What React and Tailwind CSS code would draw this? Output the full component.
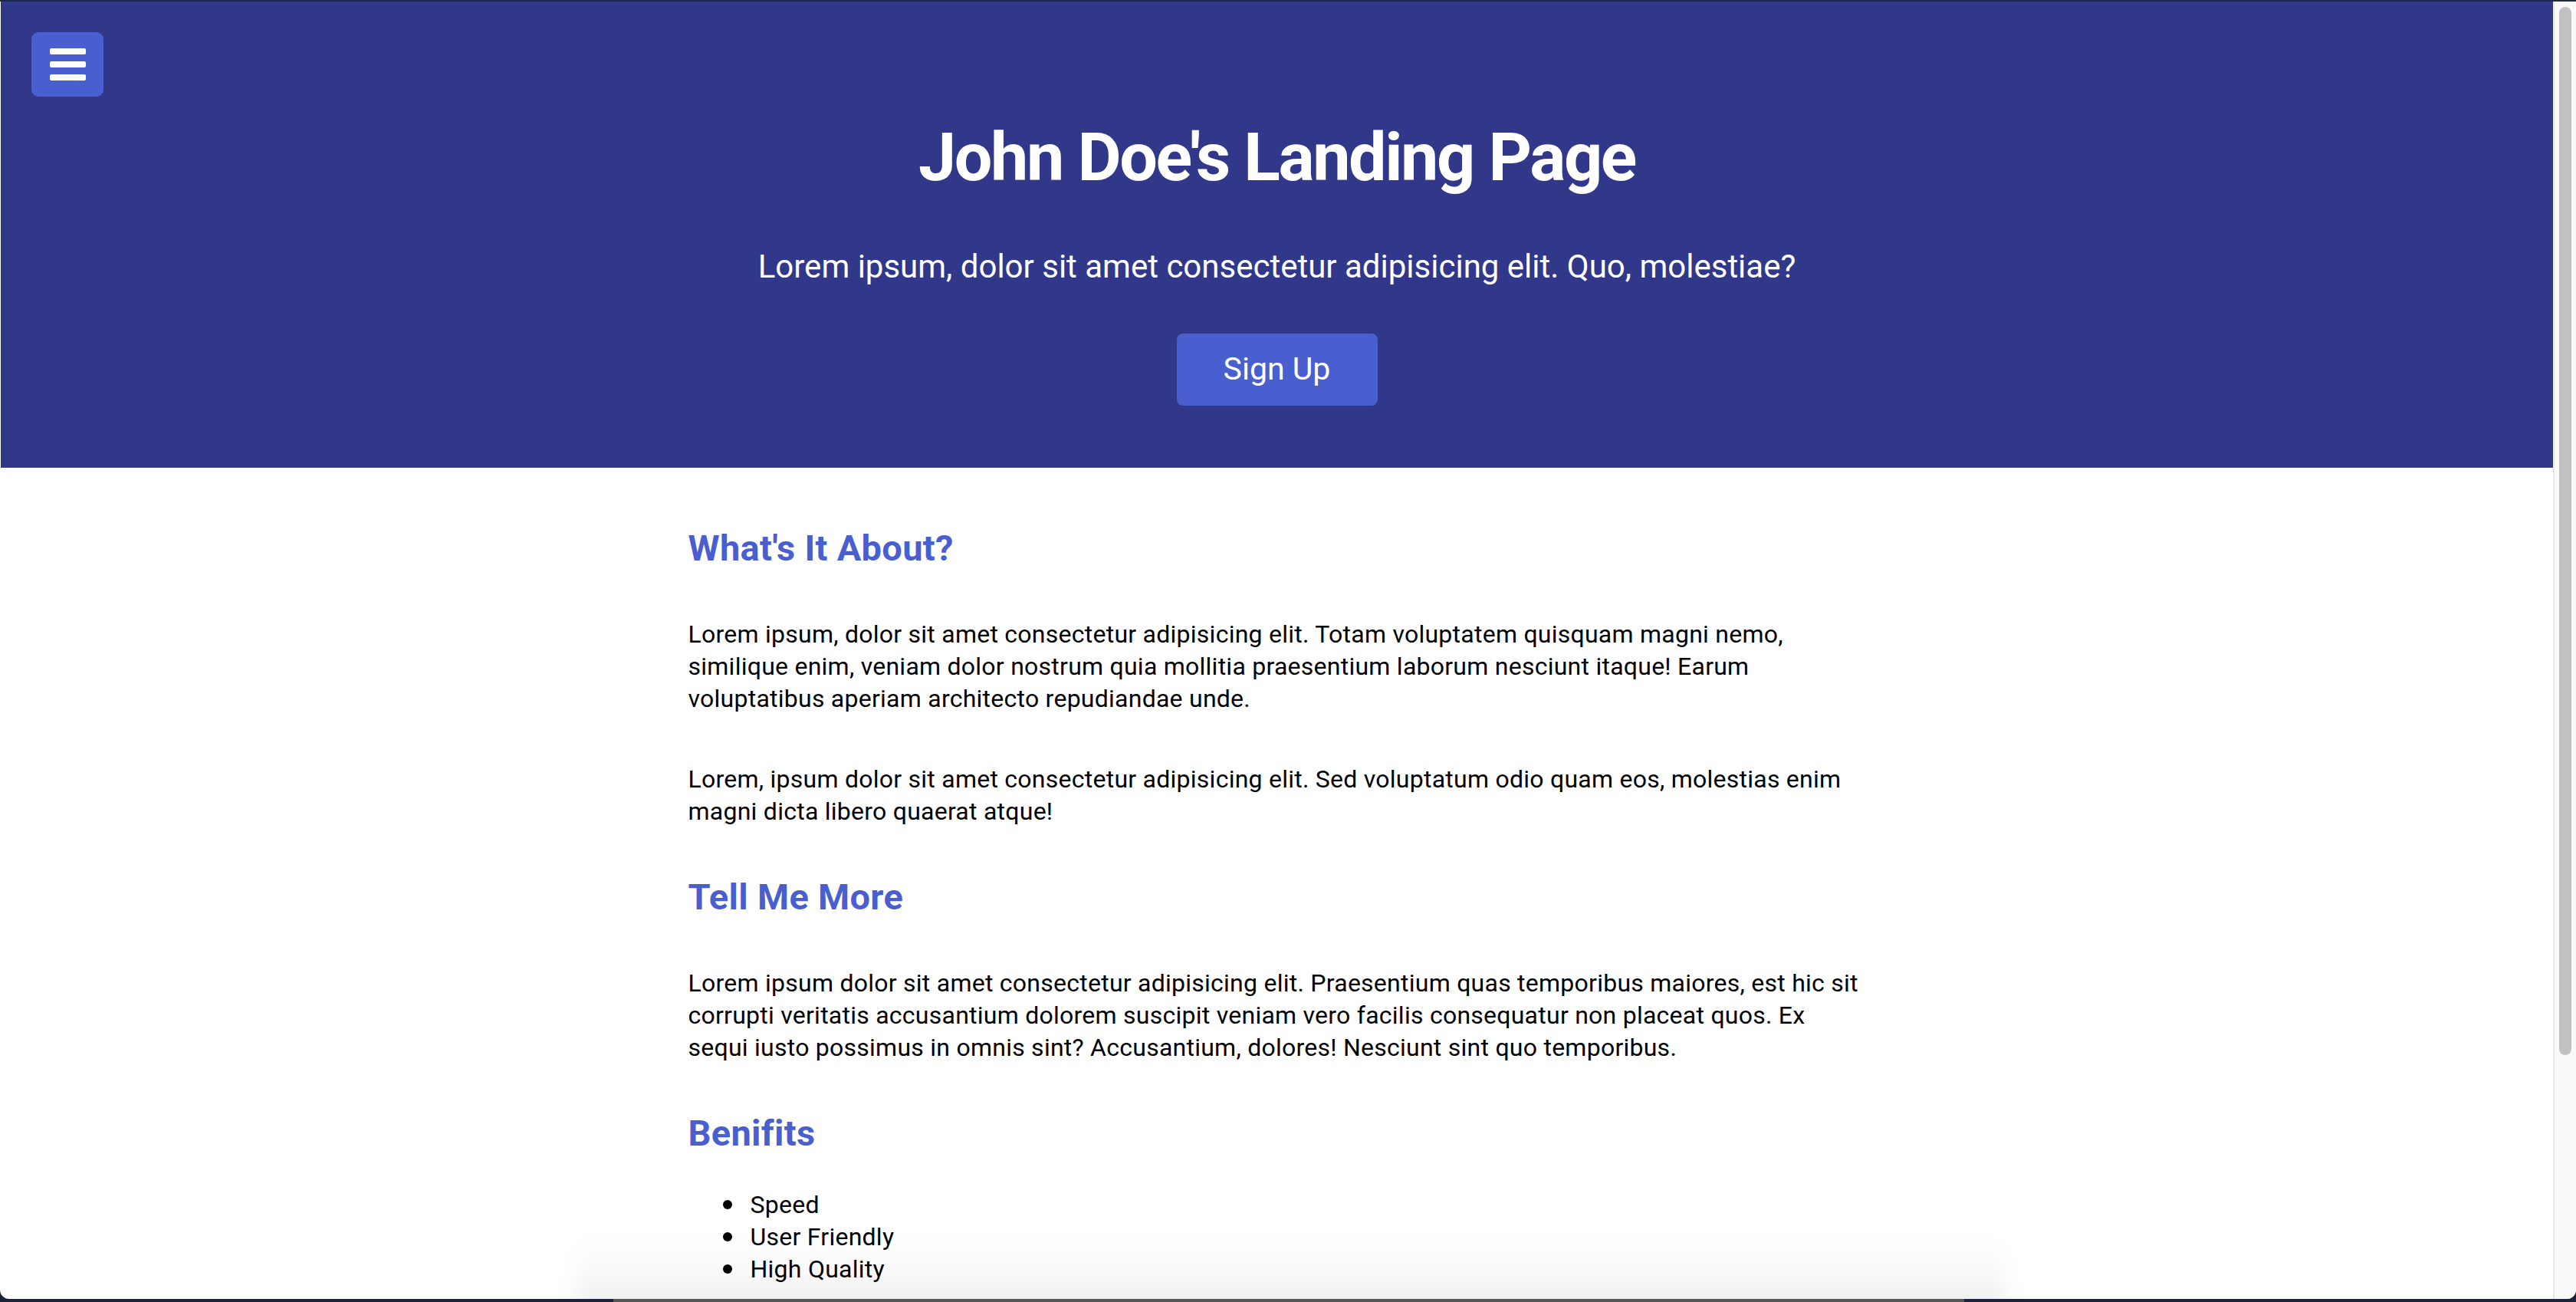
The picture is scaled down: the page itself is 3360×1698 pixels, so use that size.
import React from "react";

const paragraphs = {
  about: [
    "Lorem ipsum, dolor sit amet consectetur adipisicing elit. Totam voluptatem quisquam magni nemo, similique enim, veniam dolor nostrum quia mollitia praesentium laborum nesciunt itaque! Earum voluptatibus aperiam architecto repudiandae unde.",
    "Lorem, ipsum dolor sit amet consectetur adipisicing elit. Sed voluptatum odio quam eos, molestias enim magni dicta libero quaerat atque!",
  ],
  more: [
    "Lorem ipsum dolor sit amet consectetur adipisicing elit. Praesentium quas temporibus maiores, est hic sit corrupti veritatis accusantium dolorem suscipit veniam vero facilis consequatur non placeat quos. Ex sequi iusto possimus in omnis sint? Accusantium, dolores! Nesciunt sint quo temporibus.",
  ],
};

const benefits = ["Speed", "User Friendly", "High Quality"];

function Heading({ children }) {
  return (
    <h2 className="text-[47px] leading-[56px] tracking-[0.3px] font-bold text-[#4a5fcf]">{children}</h2>
  );
}

function Para({ children }) {
  return <p className="text-[32px] leading-[42px] tracking-[0.25px] text-black">{children}</p>;
}

export default function App() {
  return (
    <div className="w-[3360px] h-[1698px] bg-[#1c2238] flex flex-col overflow-hidden font-['Roboto',_'Liberation_Sans',_sans-serif]">
      <div className="h-[2px] bg-[#1f2944]" />
      <div className="h-[1692px] flex bg-white rounded-b-[12px] overflow-hidden">
        <main className="relative flex-1 flex flex-col overflow-hidden border-l border-white/20">
          <header className="h-[608px] bg-[#31388a] flex flex-col pt-[40px] px-[40px]">
            <button className="w-[94px] h-[84px] rounded-[9px] bg-[#4a5fcf] flex flex-col items-center justify-center gap-[9px]">
              <span className="block w-[47px] h-[8px] rounded-[2px] bg-white" />
              <span className="block w-[47px] h-[8px] rounded-[2px] bg-white" />
              <span className="block w-[47px] h-[8px] rounded-[2px] bg-white" />
            </button>
            <div className="flex flex-col items-center text-white -mx-[40px]">
              <h1 className="mt-[26px] text-[88px] leading-[106px] tracking-[-2.4px] font-bold">
                John Doe's Landing Page
              </h1>
              <p className="mt-[65px] text-[42px] leading-[50px]">
                Lorem ipsum, dolor sit amet consectetur adipisicing elit. Quo, molestiae?
              </p>
              <button className="mt-[62px] w-[262px] h-[94px] rounded-[8px] bg-[#4a5fcf] text-[41px] text-white flex items-center justify-center">
                Sign Up
              </button>
            </div>
          </header>

          <section className="w-[1536px] mx-auto pt-[77px] flex flex-col gap-[63px]">
            <Heading>What's It About?</Heading>
            {paragraphs.about.map((t, i) => (
              <Para key={i}>{t}</Para>
            ))}
            <Heading>Tell Me More</Heading>
            {paragraphs.more.map((t, i) => (
              <Para key={i}>{t}</Para>
            ))}
            <div className="flex flex-col gap-[44px]">
              <Heading>Benifits</Heading>
              <ul className="flex flex-col text-[32px] leading-[42px] tracking-[0.25px] text-black">
                {benefits.map((b) => (
                  <li key={b} className="flex items-center">
                    <span className="ml-[45px] mr-[24px] w-[12px] h-[12px] rounded-full bg-black" />
                    {b}
                  </li>
                ))}
              </ul>
            </div>
          </section>

          <div className="absolute bottom-[-30px] left-[751px] w-[1862px] h-[110px] bg-linear-to-b from-transparent via-black/[0.03] to-black/10 blur-[14px] pointer-events-none" />
        </main>

        <aside className="w-[30px] bg-[#f9f9f9] border-l-2 border-[#e8e8e8] pt-[7px] pl-[6px]">
          <div className="w-[16px] h-[1367px] rounded-full bg-[#c1c1c1]" />
        </aside>
      </div>
      <div className="h-[4px] flex">
        <div className="ml-[800px] w-[1762px] h-full bg-[#555555]" />
      </div>
    </div>
  );
}
